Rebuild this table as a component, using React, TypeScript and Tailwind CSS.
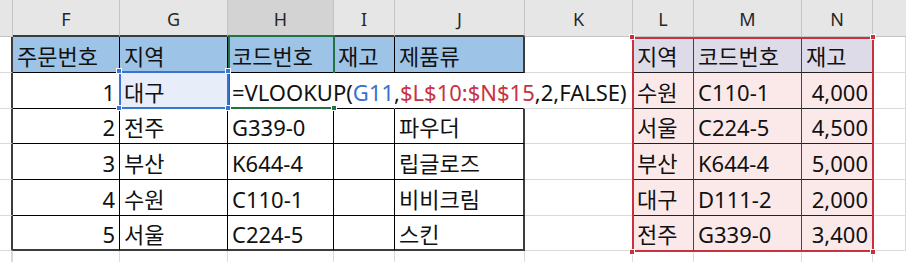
import React from "react";

type Cell = { c: string; t?: React.ReactNode };

const base =
  "shrink-0 flex items-center whitespace-nowrap overflow-visible text-[22px] leading-none text-[#111]";
const left = "justify-start pl-[4px]";
const right = "justify-end pr-[4px]";

// grid + table borders
const grid = "border-r border-b border-r-[#dadada] border-b-[#dadada]";
const eCol = "w-[13px] border-r-2 border-b border-r-[#3c3c3c] border-b-[#dadada]";
const tIn = "border-r border-b border-r-black border-b-black";
const tRight = "border-r-2 border-b border-r-[#3c3c3c] border-b-black";
const tBot = "border-r border-b-2 border-r-black border-b-[#3c3c3c]";
const tBotRight = "border-r-2 border-b-2 border-r-[#3c3c3c] border-b-[#3c3c3c]";
const lk = "border-r border-b border-r-[#444] border-b-[#222]";
const lkEnd = "border-r border-b border-r-[#dadada] border-b-[#222]";

const blue = "bg-[#9dc3e6]";
const lav = "bg-[#dddbe8]";
const pink = "bg-[#fbe9ea]";

const heights = ["h-[36px]", "h-[36px]", "h-[35px]", "h-[36px]", "h-[36px]", "h-[35px]"];

const Formula = () => (
  <span>
    =VLOOKUP(<span className="text-[#3a6fd2]">G11</span>,
    <span className="text-[#c8323f]">$L$10:$N$15</span>,2,FALSE)
  </span>
);

const orders = [
  ["2", "전주", "G339-0", "파우더"],
  ["3", "부산", "K644-4", "립글로즈"],
  ["4", "수원", "C110-1", "비비크림"],
  ["5", "서울", "C224-5", "스킨"],
];

const lookup = [
  ["수원", "C110-1", "4,000"],
  ["서울", "C224-5", "4,500"],
  ["부산", "K644-4", "5,000"],
  ["대구", "D111-2", "2,000"],
  ["전주", "G339-0", "3,400"],
];

function rowCells(i: number): Cell[] {
  if (i === 0) {
    return [
      { c: eCol },
      { c: `w-[107px] ${tIn} ${blue} ${left}`, t: "주문번호" },
      { c: `w-[108px] ${tIn} ${blue} ${left}`, t: "지역" },
      { c: `w-[106px] ${tIn} ${blue} ${left}`, t: "코드번호" },
      { c: `w-[61px] ${tIn} ${blue} ${left}`, t: "재고" },
      { c: `w-[130px] ${tRight} ${blue} ${left}`, t: "제품류" },
      { c: `w-[108px] ${grid}` },
      { c: `w-[61px] ${lk} ${lav} ${left}`, t: "지역" },
      { c: `w-[108px] ${lk} ${lav} ${left}`, t: "코드번호" },
      { c: `w-[71px] ${lkEnd} ${lav} ${left}`, t: "재고" },
      { c: `w-[33px] ${grid}` },
    ];
  }
  const last = i === 5;
  const inner = last ? tBot : tIn;
  const edge = last ? tBotRight : tRight;
  const lk0 = lookup[i - 1];
  if (i === 1) {
    return [
      { c: eCol },
      { c: `w-[107px] ${inner} ${right}`, t: "1" },
      { c: `w-[108px] ${inner} bg-[#e8eef9] ${left}`, t: "대구" },
      {
        c: "w-[106px] border-r border-b border-r-transparent border-b-black justify-start pl-[4px]",
        t: <Formula />,
      },
      { c: "w-[61px] border-r border-b border-r-transparent border-b-black" },
      { c: "w-[130px] border-r-2 border-b border-r-transparent border-b-black" },
      { c: "w-[108px] border-r border-b border-r-transparent border-b-[#dadada]" },
      { c: `w-[61px] ${lk} ${pink} ${left}`, t: lk0[0] },
      { c: `w-[108px] ${lk} ${pink} ${left}`, t: lk0[1] },
      { c: `w-[71px] ${lkEnd} ${pink} ${right}`, t: lk0[2] },
      { c: `w-[33px] ${grid}` },
    ];
  }
  const o = orders[i - 2];
  return [
    { c: eCol },
    { c: `w-[107px] ${inner} ${right}`, t: o[0] },
    { c: `w-[108px] ${inner} ${left}`, t: o[1] },
    { c: `w-[106px] ${inner} ${left}`, t: o[2] },
    { c: `w-[61px] ${inner}` },
    { c: `w-[130px] ${edge} ${left}`, t: o[3] },
    { c: `w-[108px] ${grid}` },
    { c: `w-[61px] ${lk} ${pink} ${left}`, t: lk0[0] },
    { c: `w-[108px] ${lk} ${pink} ${left}`, t: lk0[1] },
    { c: `w-[71px] ${lkEnd} ${pink} ${right}`, t: lk0[2] },
    { c: `w-[33px] ${grid}` },
  ];
}

const headers: Cell[] = [
  { c: "w-[13px] border-r border-b border-r-[#c4c4c4] border-b-[#c4c4c4]" },
  { c: "w-[107px] border-r border-b-2 border-r-[#c4c4c4] border-b-[#3c3c3c]", t: "F" },
  { c: "w-[108px] border-r border-b-2 border-r-[#c4c4c4] border-b-[#3c3c3c]", t: "G" },
  { c: "w-[106px] border-r border-b-2 border-r-[#c4c4c4] border-b-[#217346] bg-[#d3d3d3] text-[#1e7145]", t: "H" },
  { c: "w-[61px] border-r border-b-2 border-r-[#c4c4c4] border-b-[#3c3c3c]", t: "I" },
  { c: "w-[130px] border-r border-b-2 border-r-[#c4c4c4] border-b-[#3c3c3c]", t: "J" },
  { c: "w-[108px] border-r border-b border-r-[#c4c4c4] border-b-[#c4c4c4]", t: "K" },
  { c: "w-[61px] border-r border-b border-r-[#c4c4c4] border-b-[#c4c4c4]", t: "L" },
  { c: "w-[108px] border-r border-b border-r-[#c4c4c4] border-b-[#c4c4c4]", t: "M" },
  { c: "w-[71px] border-r border-b border-r-[#c4c4c4] border-b-[#c4c4c4]", t: "N" },
  { c: "w-[33px] border-b border-b-[#c4c4c4]" },
];

const tail = [
  "w-[13px] border-r-2 border-r-[#dadada]",
  "w-[107px] border-r border-r-[#dadada]",
  "w-[108px] border-r border-r-[#dadada]",
  "w-[106px] border-r border-r-[#dadada]",
  "w-[61px] border-r border-r-[#dadada]",
  "w-[130px] border-r border-r-[#dadada]",
  "w-[108px] border-r border-r-[#dadada]",
  "w-[61px] border-r border-r-[#dadada]",
  "w-[108px] border-r border-r-[#dadada]",
  "w-[71px] border-r border-r-[#dadada]",
  "w-[33px]",
];

const Handle = ({ c }: { c: string }) => (
  <div className={`absolute w-[6px] h-[6px] border border-white ${c}`} />
);

export default function App() {
  return (
    <div className="relative w-[906px] h-[262px] overflow-hidden bg-white font-['Noto_Sans','Noto_Sans_CJK_KR',sans-serif]">
      {/* column headers */}
      <div className="flex h-[37px] bg-[#e6e6e6]">
        {headers.map((h, k) => (
          <div
            key={k}
            className={`shrink-0 flex items-center justify-center pt-[3px] text-[18px] text-[#262626] ${h.c}`}
          >
            {h.t}
          </div>
        ))}
      </div>

      {heights.map((hc, i) => (
        <div key={i} className={`flex ${hc}`}>
          {rowCells(i).map((cell, k) => (
            <div key={k} className={`${base} pt-[2px] ${cell.c}`}>
              {cell.t}
            </div>
          ))}
        </div>
      ))}

      <div className="flex h-[11px]">
        {tail.map((c, k) => (
          <div key={k} className={`shrink-0 ${c}`} />
        ))}
      </div>

      {/* active cell H10 (green) */}
      <div className="absolute left-[228px] top-[35px] w-[107px] h-[74px] border-l-2 border-t-2 border-b-2 border-[#217346]" />
      <div className="absolute left-[333px] top-[35px] w-[2px] h-[38px] bg-[#217346]" />
      <Handle c="left-[331px] top-[105px] bg-[#217346]" />

      {/* G11 reference (blue) */}
      <div className="absolute left-[119px] top-[71px] w-[110px] h-[38px] border-2 border-[#3b73d1]" />
      <Handle c="left-[116px] top-[68px] bg-[#3b73d1]" />
      <Handle c="left-[225px] top-[68px] bg-[#3b73d1]" />
      <Handle c="left-[116px] top-[105px] bg-[#3b73d1]" />
      <Handle c="left-[225px] top-[105px] bg-[#3b73d1]" />

      {/* $L$10:$N$15 reference (red) */}
      <div className="absolute left-[632px] top-[37px] w-[242px] h-[215px] border-2 border-[#c8323e]" />
      <Handle c="left-[629px] top-[34px] bg-[#c8323e]" />
      <Handle c="left-[870px] top-[34px] bg-[#c8323e]" />
      <Handle c="left-[629px] top-[249px] bg-[#c8323e]" />
      <Handle c="left-[870px] top-[249px] bg-[#c8323e]" />
    </div>
  );
}
